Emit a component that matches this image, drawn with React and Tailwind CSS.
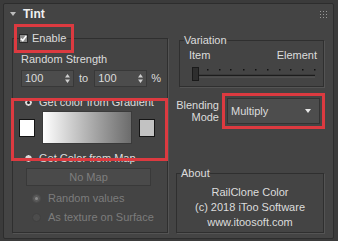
import React from 'react';

function Radio({ checked, dim }) {
  return (
    <span
      className={`inline-flex items-center justify-center w-[9px] h-[9px] rounded-full border ${
        dim ? 'bg-[#5a5a5a] border-[#4a4a4a]' : 'bg-[#d8d8d8] border-[#2a2a2a]'
      }`}
    >
      {checked && <span className={`w-[3px] h-[3px] rounded-full ${dim ? 'bg-[#8a8a8a]' : 'bg-[#222]'}`} />}
    </span>
  );
}

function Spinner({ value }) {
  return (
    <div className="flex items-center justify-between w-[53px] h-[17px] bg-[#4c4c4c] border border-[#383838] pl-[3px] pr-[3px]">
      <span>{value}</span>
      <svg width="5" height="9" viewBox="0 0 5 9">
        <path d="M2.5 0L5 3.5H0z M2.5 9L5 5.5H0z" fill="#cfcfcf" />
      </svg>
    </div>
  );
}

export default function App() {
  const dots = [15, 27, 38, 51, 63, 75, 87, 98, 110, 122];

  return (
    <div className="w-[338px] h-[241px] bg-[#3b3b3b] pt-[3px] pl-[3px] overflow-hidden font-['Liberation_Sans',Arial,sans-serif] text-[11px] leading-[13px] text-[#dcdcdc]">
      <div className="w-[331px] h-[236px] bg-[#444444] border border-[#2d2d2d] rounded-[2px]">
        {/* header */}
        <div className="flex items-center justify-between h-[20px] pl-[6px] pr-[6px]">
          <div className="flex items-center gap-[7px]">
            <svg width="6" height="4" viewBox="0 0 6 4">
              <path d="M0 0H6L3 4z" fill="#bdbdbd" />
            </svg>
            <span className="font-bold text-[12px] text-[#f0f0f0]">Tint</span>
          </div>
          <svg width="7" height="7" viewBox="0 0 7 7">
            {[0, 3, 6].map((x) =>
              [0, 3, 6].map((y) => <rect key={`${x}-${y}`} x={x} y={y} width="1" height="1" fill="#9a9a9a" />)
            )}
          </svg>
        </div>

        <div className="flex mt-[8px] pl-[8px]">
          {/* left column */}
          <fieldset className="w-[156px] h-[201px] border border-[#2f2f2f] shadow-[1px_1px_0_#545454] px-0 pb-0">
            <legend className="ml-[6px] relative">
              <span className="flex items-center gap-[4px] pr-[1px]">
                <span className="flex items-center justify-center w-[9px] h-[9px] bg-[#8c8c8c] border border-[#2a2a2a]">
                  <svg width="7" height="7" viewBox="0 0 7 7">
                    <path d="M0.8 3.6L2.8 5.6L6.2 1" stroke="#ffffff" strokeWidth="1.6" fill="none" />
                  </svg>
                </span>
                <span>Enable</span>
              </span>
              <span className="absolute -left-[5px] -right-[7px] -top-[8px] -bottom-[8px] border-[3px] border-[#dc3a40]" />
            </legend>

            <div className="ml-[8px] mt-[8px]">Random Strength</div>

            <div className="flex items-center ml-[8px] mt-[4px]">
              <Spinner value="100" />
              <span className="ml-[5px]">to</span>
              <span className="ml-[6px]"><Spinner value="100" /></span>
              <span className="ml-[4px]">%</span>
            </div>

            <div className="relative mt-[9px]">
              <div className="flex items-center ml-[11px]">
                <Radio checked />
                <span className="ml-[6px]">Get color from Gradient</span>
              </div>
              <div className="flex items-center ml-[6px] mt-[2px] h-[33px]">
                <div className="w-[16px] h-[18px] bg-white border border-[#151515]" />
                <div className="ml-[7px] w-[90px] h-[33px] bg-gradient-to-r from-[#ffffff] to-[#6c6c6c] border border-[#3a3a3a]" />
                <div className="ml-[7px] w-[16px] h-[18px] bg-[#c2c2c2] border border-[#151515]" />
              </div>
              <span className="absolute -left-[2px] -right-[1px] top-[2px] -bottom-[17px] border-[3px] border-[#dc3a40]" />
            </div>

            <div className="flex items-center ml-[11px] mt-[8px]">
              <Radio />
              <span className="ml-[6px]">Get Color from Map</span>
            </div>

            <div className="ml-[13px] mt-[3px] w-[125px] h-[18px] flex items-center justify-center bg-[#4a4a4a] border border-[#393939] text-[#7e7e7e]">
              No Map
            </div>

            <div className="flex items-center ml-[19px] mt-[6px] text-[#7c7c7c]">
              <Radio checked dim />
              <span className="ml-[7px]">Random values</span>
            </div>
            <div className="flex items-center ml-[19px] mt-[6px] text-[#7c7c7c]">
              <span className="w-[9px] h-[9px] rounded-full bg-[#4c4c4c] border border-[#404040]" />
              <span className="ml-[7px]">As texture on Surface</span>
            </div>
          </fieldset>

          {/* right column */}
          <div className="ml-[8px] w-[148px]">
            <fieldset className="ml-[3px] mt-[2px] w-[145px] border border-[#2f2f2f] shadow-[1px_1px_0_#545454] px-0 pb-[5px]">
              <legend className="ml-[4px]">Variation</legend>
              <div className="flex justify-between pl-[9px] pr-[6px] mt-[2px]">
                <span>Item</span>
                <span>Element</span>
              </div>
              <svg className="ml-[12px] mt-[5px] block" width="124" height="14" viewBox="0 0 124 14">
                <line x1="5" y1="8.5" x2="123" y2="8.5" stroke="#1c1c1c" strokeWidth="1.5" />
                <line x1="5" y1="10" x2="123" y2="10" stroke="#5a5a5a" strokeWidth="1" />
                {dots.map((x) => (
                  <rect key={x} x={x} y="2" width="1.5" height="1.5" fill="#111" />
                ))}
                <rect x="0.5" y="0.5" width="6" height="13" fill="#2e2e2e" stroke="#1a1a1a" />
              </svg>
            </fieldset>

            <div className="flex items-start mt-[11px]">
              <div className="w-[43px] text-right leading-[12px] pt-[1px]">
                Blending
                <br />
                Mode
              </div>
              <div className="relative ml-[8px]">
                <div className="flex items-center justify-between w-[93px] h-[26px] bg-[#4d4d4d] border border-[#333333] pl-[3px] pr-[8px]">
                  <span>Multiply</span>
                  <svg width="6" height="4" viewBox="0 0 6 4">
                    <path d="M0 0H6L3 4z" fill="#e8e8e8" />
                  </svg>
                </div>
                <span className="absolute -inset-[5px] border-[3px] border-[#dc3a40]" />
              </div>
            </div>

            <fieldset className="mt-[43px] w-[148px] border border-[#2f2f2f] shadow-[1px_1px_0_#545454] px-0 pb-[2px]">
              <legend className="ml-[4px]">About</legend>
              <div className="mt-[5px] text-center leading-[15px]">
                <div>RailClone Color</div>
                <div>(c) 2018 iToo Software</div>
                <div>www.itoosoft.com</div>
              </div>
            </fieldset>
          </div>
        </div>
      </div>
    </div>
  );
}
